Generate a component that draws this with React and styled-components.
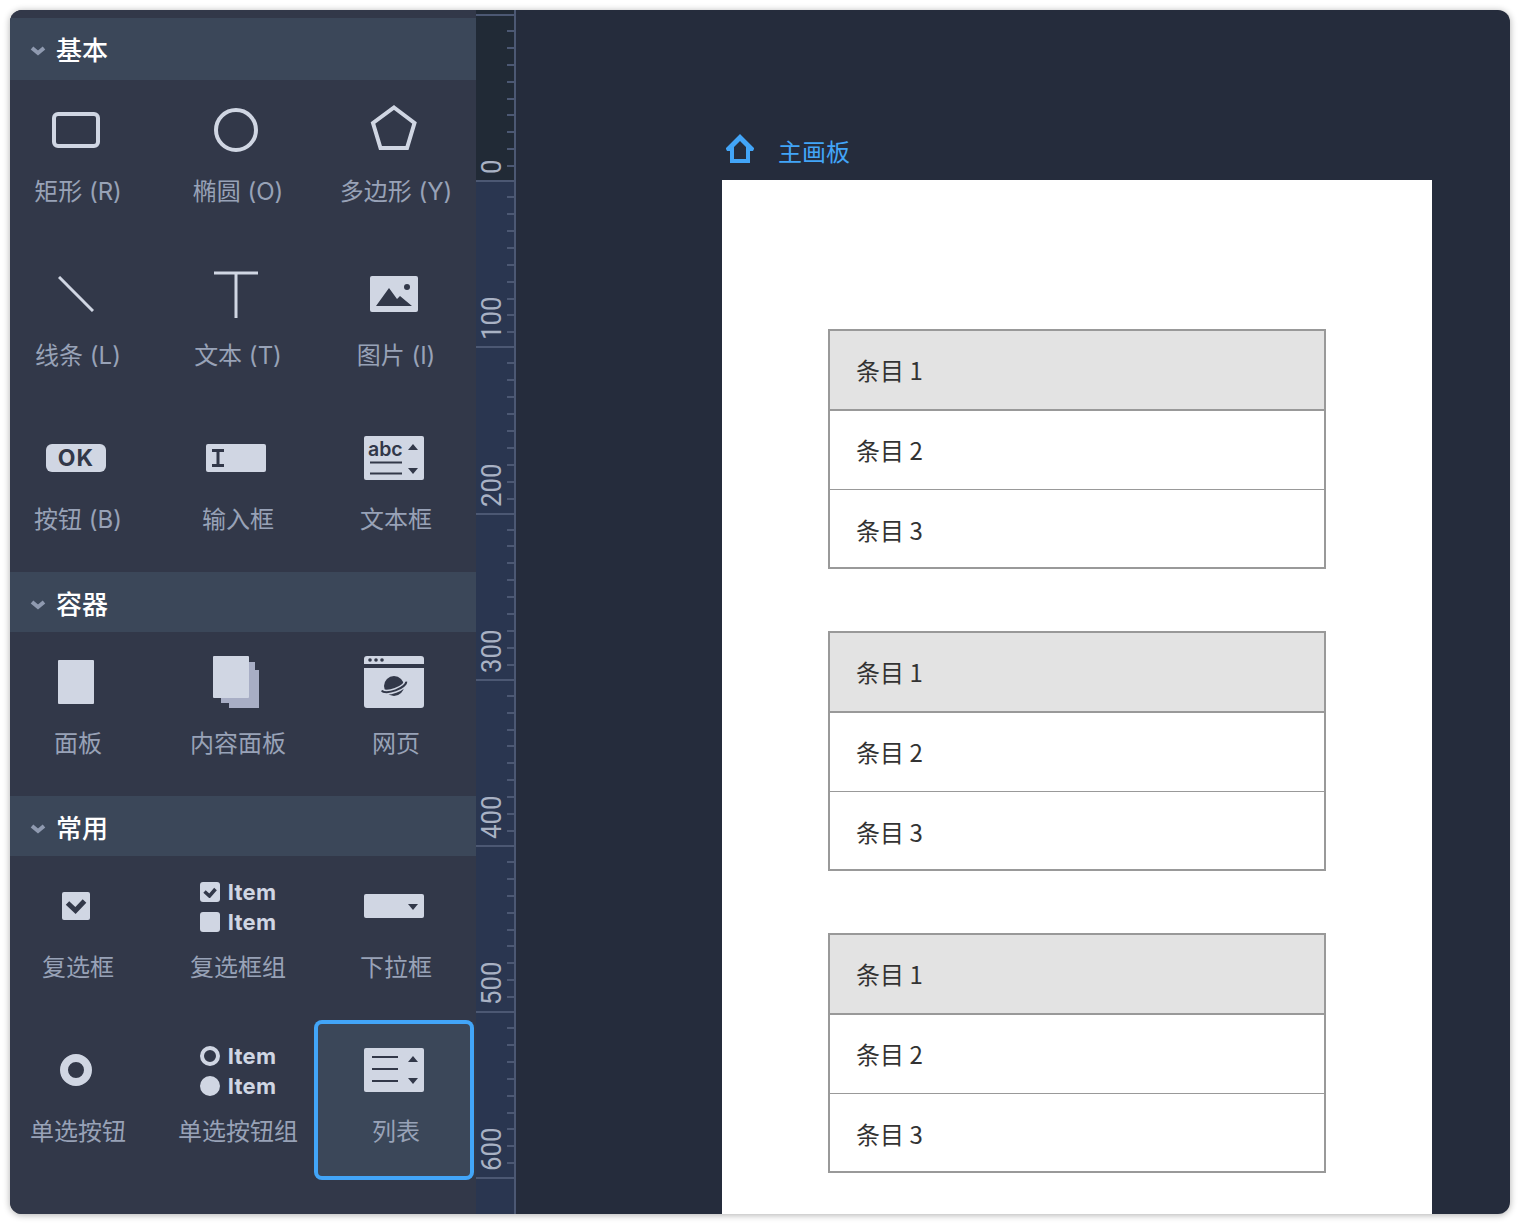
import React from "react";
import styled, { createGlobalStyle } from "styled-components";

const ICON = "#d0d6e3";
const DARK = "#323849";
const UI_FONT = `"Inter", "Noto Sans CJK SC", sans-serif`;

const GlobalStyle = createGlobalStyle`
  html, body {
    margin: 0;
    height: 1224px;
    overflow: hidden;
    background: #ffffff;
  }
`;

const Page = styled.div`
  padding: 10px;
  box-sizing: border-box;
  width: 1520px;
  height: 1224px;
`;

const Window = styled.div`
  display: flex;
  height: 1204px;
  border-radius: 12px;
  overflow: hidden;
  background: #252c3c;
  box-shadow: 0 1px 7px rgba(0, 0, 0, 0.32);
`;

const Sidebar = styled.aside`
  width: 466px;
  flex: none;
  padding-top: 8px;
  background: ${DARK};
  overflow: hidden;
`;

const SectionHeader = styled.div`
  display: flex;
  align-items: center;
  gap: 10px;
  height: ${(p) => (p.$first ? "62px" : "60px")};
  padding: ${(p) => (p.$first ? "4px" : "6px")} 0 0 20px;
  box-sizing: border-box;
  background: #3b4759;
  color: #ffffff;
  font: 500 26px/1 ${UI_FONT};
`;

const Grid = styled.div`
  display: grid;
  grid-template-columns: 160px 160px 156px;
  margin-left: -14px;
`;

const Cell = styled.div`
  display: flex;
  flex-direction: column;
  align-items: center;
  box-sizing: border-box;
  height: ${(p) => (p.$selected ? "160px" : "164px")};
  ${(p) =>
    p.$selected &&
    `
    width: 160px;
    margin-left: -2px;
    background: #3b4759;
    border-radius: 8px;
    box-shadow: inset 0 0 0 4px #42a5f8;
  `}
`;

const IconBox = styled.div`
  display: flex;
  align-items: center;
  justify-content: center;
  height: 80px;
  width: 100%;
  margin-top: 10px;
`;

const Label = styled.div`
  margin-top: 10px;
  padding-left: 4px;
  color: #98a2b7;
  font: 400 24px/24px ${UI_FONT};
  white-space: nowrap;
`;

const OkBadge = styled.div`
  display: flex;
  align-items: center;
  justify-content: center;
  width: 60px;
  height: 28px;
  border-radius: 6px;
  background: ${ICON};
  color: ${DARK};
  font: 700 23px/1 "Inter", sans-serif;
  letter-spacing: 1px;
`;

const InputBar = styled.div`
  display: flex;
  align-items: center;
  width: 60px;
  height: 28px;
  padding-left: 6px;
  box-sizing: border-box;
  border-radius: 2px;
  background: ${ICON};
`;

const ControlGroup = styled.div`
  display: flex;
  flex-direction: column;
  gap: 10px;
  margin: 2px 0 0 4px;
`;

const ControlRow = styled.div`
  display: flex;
  align-items: center;
  gap: 8px;
  height: 20px;
  color: ${ICON};
  font: 700 22px/20px "Inter", sans-serif;
  letter-spacing: 0.3px;
`;

const MiniBox = styled.div`
  display: flex;
  align-items: center;
  justify-content: center;
  width: 20px;
  height: 20px;
  border-radius: 3px;
  background: ${ICON};
`;

const MiniRadio = styled.div`
  width: 20px;
  height: 20px;
  box-sizing: border-box;
  border-radius: 50%;
  background: ${(p) => (p.$filled ? ICON : "transparent")};
  border: 4px solid ${ICON};
`;

const Ruler = styled.div`
  width: 40px;
  flex: none;
  background: #2a3650;
  border-right: 2px solid #4c5873;
  box-sizing: border-box;
`;

const RulerTop = styled.div`
  height: 4px;
  background: #212a36;
`;

const RulerSegment = styled.div`
  display: flex;
  justify-content: space-between;
  height: 166.2px;
  box-sizing: border-box;
  border-top: 2px solid #4c5873;
  background: ${(p) => (p.$zero ? "#212a36" : "transparent")};
`;

const RulerLabel = styled.div`
  writing-mode: vertical-rl;
  transform: rotate(180deg) scaleY(0.92);
  align-self: flex-end;
  height: 50px;
  width: 30px;
  margin: 0 0 4px 1px;
  color: #a9b2c4;
  font: 400 28px/30px "Roboto", sans-serif;
  text-align: left;
`;

const TickColumn = styled.div`
  display: flex;
  flex-direction: column;
  justify-content: space-between;
  padding: 14px 0 13px;
  box-sizing: border-box;
  width: 8px;
`;

const Tick = styled.div`
  height: 2px;
  background: #4c5873;
`;

const Canvas = styled.main`
  flex: 1;
  padding: 125px 0 0 206px;
  min-width: 0;
  overflow: hidden;
`;

const BoardTitle = styled.div`
  display: flex;
  align-items: center;
  gap: 24px;
  height: 45px;
  box-sizing: border-box;
  padding: 0 0 14px 4px;
  color: #42a5f8;
  font: 400 24px/1 "Noto Sans CJK SC", sans-serif;
`;

const HomeSvg = styled.svg`
  margin-bottom: 4px;
`;

const Board = styled.div`
  display: flex;
  flex-direction: column;
  gap: 62px;
  width: 710px;
  height: 1100px;
  padding: 149px 0 0 106px;
  box-sizing: border-box;
  background: #ffffff;
`;

const List = styled.div`
  width: 498px;
  box-sizing: border-box;
  border: 2px solid #999999;
`;

const ListRow = styled.div`
  display: flex;
  align-items: center;
  height: 80px;
  box-sizing: border-box;
  padding-left: 26px;
  border-top: 2px solid #999999;
  background: ${(p) => (p.$active ? "#e3e3e3" : "#ffffff")};
  color: #333333;
  font: 400 24px/1 "Noto Sans CJK SC", sans-serif;

  &:first-child {
    height: 78px;
    border-top: 0;
  }
  &:last-child {
    height: 78px;
    padding-top: 2px;
    border-top-width: 1px;
  }
`;

const Chevron = () => (
  <svg width="16" height="10" viewBox="0 0 16 10">
    <path d="M2 2l6 5 6-5" fill="none" stroke="#8f9ab0" strokeWidth="4" />
  </svg>
);

const RectIcon = () => (
  <svg width="48" height="36" viewBox="0 0 48 36">
    <rect x="2" y="2" width="44" height="32" rx="4" fill="none" stroke={ICON} strokeWidth="4" />
  </svg>
);

const CircleIcon = () => (
  <svg width="44" height="44" viewBox="0 0 44 44">
    <circle cx="22" cy="22" r="20" fill="none" stroke={ICON} strokeWidth="4" />
  </svg>
);

const PentagonIcon = () => (
  <svg width="48" height="50" viewBox="0 0 48 50">
    <path d="M24 2.500L44.500 18 37 43H10.500L3 18Z" fill="none" stroke={ICON} strokeWidth="4" />
  </svg>
);

const LineIcon = () => (
  <svg width="36" height="36" viewBox="0 0 36 36">
    <path d="M1 1l34 34" stroke={ICON} strokeWidth="3" />
  </svg>
);

const TextIcon = () => (
  <svg width="44" height="48" viewBox="0 0 44 48">
    <path d="M0 3h44M22 3v45" fill="none" stroke={ICON} strokeWidth="3" />
  </svg>
);

const ImageIcon = () => (
  <svg width="48" height="36" viewBox="0 0 48 36">
    <rect width="48" height="36" rx="2" fill={ICON} />
    <path d="M6 30L19 12l8 11 3-3 12 10Z" fill={DARK} />
    <circle cx="37" cy="11" r="3" fill={DARK} />
  </svg>
);

const IBeam = () => (
  <svg width="12" height="18" viewBox="0 0 12 18">
    <path d="M0 1.500h12M0 16.500h12M6 1.500v15" fill="none" stroke={DARK} strokeWidth="3" />
  </svg>
);

const TextAreaIcon = () => (
  <svg width="60" height="44" viewBox="0 0 60 44">
    <rect width="60" height="44" rx="2" fill={ICON} />
    <text x="4" y="20" fill={DARK} fontFamily="Inter" fontWeight="600" fontSize="19.500">abc</text>
    <path d="M6 26.500h32M6 37.500h32" stroke={DARK} strokeWidth="2" />
    <path d="M44 14l5-6 5 6ZM44 32l5 6 5-6Z" fill={DARK} />
  </svg>
);

const PanelIcon = () => (
  <svg width="36" height="44" viewBox="0 0 36 44">
    <rect width="36" height="44" rx="1" fill={ICON} />
  </svg>
);

const ContentPanelIcon = () => (
  <svg width="46" height="52" viewBox="0 0 46 52">
    <path d="M16 14h30v38H16Z" fill="#a8aec5" />
    <path d="M8 6h34v41H8Z" fill="#a8aec5" />
    <rect width="36" height="42" rx="1" fill={ICON} />
  </svg>
);

const WebPageIcon = () => (
  <svg width="60" height="52" viewBox="0 0 60 52">
    <path d="M3 0h54a3 3 0 013 3v5H0V3a3 3 0 013-3Z" fill={ICON} />
    <path d="M0 12h60v37a3 3 0 01-3 3H3a3 3 0 01-3-3Z" fill={ICON} />
    <circle cx="6" cy="4" r="1.800" fill={DARK} />
    <circle cx="12" cy="4" r="1.800" fill={DARK} />
    <circle cx="18" cy="4" r="1.800" fill={DARK} />
    <circle cx="30" cy="30" r="10" fill={DARK} />
    <path d="M17.800 34.400A13 5 -20 0 0 42.200 25.600" fill="none" stroke={ICON} strokeWidth="5" />
    <path d="M17.800 34.400A13 5 -20 0 0 42.200 25.600" fill="none" stroke={DARK} strokeWidth="2" />
  </svg>
);

const CheckboxIcon = () => (
  <svg width="28" height="28" viewBox="0 0 28 28">
    <rect width="28" height="28" rx="2" fill={ICON} />
    <path d="M5.500 11l8 7.500L22.500 9" fill="none" stroke={DARK} strokeWidth="5" />
  </svg>
);

const MiniCheck = () => (
  <svg width="14" height="12" viewBox="0 0 14 12">
    <path d="M1.500 5.500l5 4.500L12.500 3" fill="none" stroke={DARK} strokeWidth="3.500" />
  </svg>
);

const SelectIcon = () => (
  <svg width="60" height="24" viewBox="0 0 60 24">
    <rect width="60" height="24" rx="2" fill={ICON} />
    <path d="M44 10h10l-5 6Z" fill={DARK} />
  </svg>
);

const RadioIcon = () => (
  <svg width="32" height="32" viewBox="0 0 32 32">
    <circle cx="16" cy="16" r="12" fill="none" stroke={ICON} strokeWidth="8" />
  </svg>
);

const ListIcon = () => (
  <svg width="60" height="44" viewBox="0 0 60 44">
    <rect width="60" height="44" rx="2" fill={ICON} />
    <path d="M8 9h26M8 21h26M8 33h26" stroke={DARK} strokeWidth="2" />
    <path d="M44 14l5-6 5 6ZM44 30l5 6 5-6Z" fill={DARK} />
  </svg>
);

const HomeIcon = () => (
  <HomeSvg width="28" height="29" viewBox="0 0 28 29">
    <path
      fillRule="evenodd"
      d="M14 0L28 14v1l-1 2h-3v12H4V17H1L0 15v-1ZM14 7L8 13v12h12V13Z"
      fill="#42a5f8"
    />
  </HomeSvg>
);

const CheckGroup = () => (
  <ControlGroup>
    <ControlRow>
      <MiniBox>
        <MiniCheck />
      </MiniBox>
      Item
    </ControlRow>
    <ControlRow>
      <MiniBox />
      Item
    </ControlRow>
  </ControlGroup>
);

const RadioGroup = () => (
  <ControlGroup>
    <ControlRow>
      <MiniRadio />
      Item
    </ControlRow>
    <ControlRow>
      <MiniRadio $filled />
      Item
    </ControlRow>
  </ControlGroup>
);

const sections = [
  {
    title: "基本",
    items: [
      { label: "矩形 (R)", icon: <RectIcon /> },
      { label: "椭圆 (O)", icon: <CircleIcon /> },
      { label: "多边形 (Y)", icon: <PentagonIcon /> },
      { label: "线条 (L)", icon: <LineIcon /> },
      { label: "文本 (T)", icon: <TextIcon /> },
      { label: "图片 (I)", icon: <ImageIcon /> },
      { label: "按钮 (B)", icon: <OkBadge>OK</OkBadge> },
      { label: "输入框", icon: <InputBar><IBeam /></InputBar> },
      { label: "文本框", icon: <TextAreaIcon /> },
    ],
  },
  {
    title: "容器",
    items: [
      { label: "面板", icon: <PanelIcon /> },
      { label: "内容面板", icon: <ContentPanelIcon /> },
      { label: "网页", icon: <WebPageIcon /> },
    ],
  },
  {
    title: "常用",
    items: [
      { label: "复选框", icon: <CheckboxIcon /> },
      { label: "复选框组", icon: <CheckGroup /> },
      { label: "下拉框", icon: <SelectIcon /> },
      { label: "单选按钮", icon: <RadioIcon /> },
      { label: "单选按钮组", icon: <RadioGroup /> },
      { label: "列表", icon: <ListIcon />, selected: true },
    ],
  },
];

const rulerMarks = [0, 100, 200, 300, 400, 500, 600];

export default function App() {
  return (
    <Page>
      <GlobalStyle />
      <Window>
        <Sidebar>
          {sections.map((section, i) => (
            <section key={section.title}>
              <SectionHeader $first={i === 0}>
                <Chevron />
                {section.title}
              </SectionHeader>
              <Grid>
                {section.items.map((item) => (
                  <Cell key={item.label} $selected={item.selected}>
                    <IconBox>{item.icon}</IconBox>
                    <Label>{item.label}</Label>
                  </Cell>
                ))}
              </Grid>
            </section>
          ))}
        </Sidebar>
        <Ruler>
          <RulerTop />
          {rulerMarks.map((mark) => (
            <RulerSegment key={mark} $zero={mark === 0}>
              <RulerLabel>{mark}</RulerLabel>
              <TickColumn>
                {Array.from({ length: 9 }, (_, i) => (
                  <Tick key={i} />
                ))}
              </TickColumn>
            </RulerSegment>
          ))}
          <RulerSegment />
        </Ruler>
        <Canvas>
          <BoardTitle>
            <HomeIcon />
            主画板
          </BoardTitle>
          <Board>
            {[0, 1, 2].map((n) => (
              <List key={n}>
                <ListRow $active>条目 1</ListRow>
                <ListRow>条目 2</ListRow>
                <ListRow>条目 3</ListRow>
              </List>
            ))}
          </Board>
        </Canvas>
      </Window>
    </Page>
  );
}
